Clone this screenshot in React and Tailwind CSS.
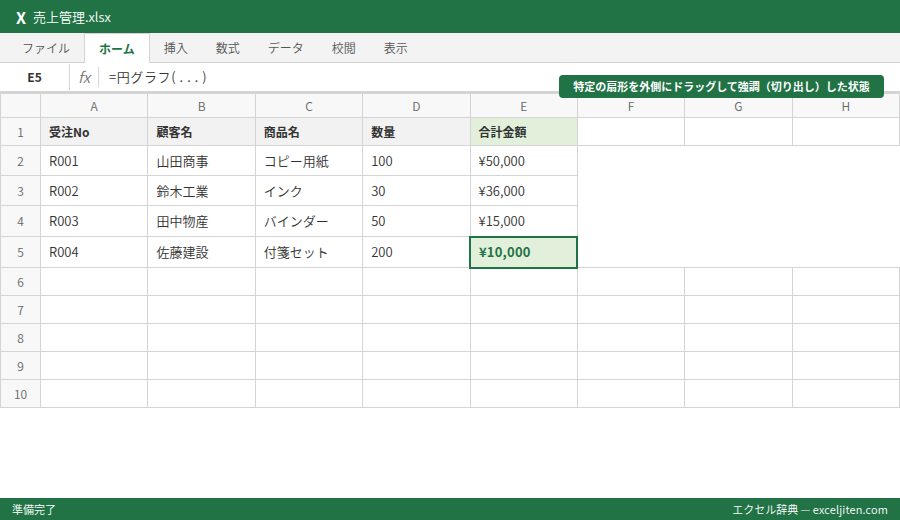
const font = { fontFamily: '"Noto Sans CJK JP", sans-serif' };
const tabs = ["ファイル", "ホーム", "挿入", "数式", "データ", "校閲", "表示"];
const cols = ["A", "B", "C", "D", "E", "F", "G", "H"];
const data = [
  ["R001", "山田商事", "コピー用紙", "100", "¥50,000"],
  ["R002", "鈴木工業", "インク", "30", "¥36,000"],
  ["R003", "田中物産", "バインダー", "50", "¥15,000"],
  ["R004", "佐藤建設", "付箋セット", "200", "¥10,000"],
];
const heads = ["受注No", "顧客名", "商品名", "数量", "合計金額"];
const rowH = ["h-[30px]", "h-[30px]", "h-[31px]", "h-[31px]"];
const border = "border border-[#d4d4d4] px-2 py-0 text-left text-[#333]";
const cell = `${border} text-[13px]`;
const rh = "border border-[#d4d4d4] bg-[#f8f8f8] p-0 text-center text-xs font-[350] text-[#666]";

export default function App() {
  return (
    <div style={font} className="relative flex h-[520px] w-[900px] flex-col overflow-hidden bg-white font-[350]">
      <div className="flex h-[33px] items-center gap-[7px] bg-[#217346] px-4 text-[13px] text-white">
        <span className="text-base leading-none font-bold">X</span>
        <span>売上管理.xlsx</span>
      </div>
      <div className="flex h-[30px] items-end border-b border-[#d4d4d4] bg-[#f3f3f3] px-2">
        {tabs.map((t, i) =>
          i === 1 ? (
            <div key={t} className="-mb-px flex h-[30px] items-center border-x border-t border-[#d4d4d4] bg-white px-[14px] text-xs font-bold text-[#217346]">{t}</div>
          ) : (
            <div key={t} className="flex h-[29px] items-center px-[14px] text-xs text-[#555]">{t}</div>
          )
        )}
      </div>
      <div className="flex h-[30px] items-center border-b-2 border-[#d4d4d4]">
        <div className="flex h-[26px] w-[70px] items-center justify-center border-r border-[#d4d4d4] text-xs font-bold text-[#333]">E5</div>
        <div className="flex h-5 w-[29px] items-center justify-center border-r border-[#d4d4d4] text-[15px] text-[#777] italic">fx</div>
        <div className="pl-[10px] text-[13px] tracking-[0.6px] text-[#333]">=円グラフ( . . . )</div>
      </div>
      <table className="w-[900px] table-fixed border-collapse">
        <colgroup>
          <col className="w-10" />
          {cols.map((c) => <col key={c} />)}
        </colgroup>
        <thead>
          <tr className="h-6">
            <th className={rh}></th>
            {cols.map((c) => <th key={c} className={rh}>{c}</th>)}
          </tr>
        </thead>
        <tbody>
          <tr className="h-7">
            <td className={rh}>1</td>
            {heads.map((h, i) => (
              <td key={h} className={`${border} text-xs font-bold ${i === 4 ? "bg-[#e2efda]" : "bg-[#f2f2f2]"}`}>{h}</td>
            ))}
            <td className={cell}></td><td className={cell}></td><td className={cell}></td>
          </tr>
          {data.map((row, r) => (
            <tr key={row[0]} className={rowH[r]}>
              <td className={rh}>{r + 2}</td>
              {row.map((v, i) =>
                r === 3 && i === 4 ? (
                  <td key={i} className="border-2 border-[#217346] bg-[#e2efda] px-2 py-0 text-left text-[13px] font-bold tracking-[0.2px] text-[#217346]">{v}</td>
                ) : (
                  <td key={i} className={cell}>{v}</td>
                )
              )}
              <td colSpan={3}></td>
            </tr>
          ))}
          {[6, 7, 8, 9, 10].map((n) => (
            <tr key={n} className="h-7">
              <td className={rh}>{n}</td>
              {cols.map((c) => <td key={c} className={cell}></td>)}
            </tr>
          ))}
        </tbody>
      </table>
      <div className="absolute top-[75px] left-[559px] flex h-[23px] w-[325px] items-center justify-center rounded bg-[#217346] text-[11px] font-bold text-white">
        特定の扇形を外側にドラッグして強調（切り出し）した状態
      </div>
      <div className="mt-auto flex h-[22px] items-center justify-between bg-[#217346] px-3 text-[11px] text-white">
        <span>準備完了</span>
        <span>エクセル辞典 — <span className="tracking-[0.15px]">exceljiten.com</span></span>
      </div>
    </div>
  );
}
